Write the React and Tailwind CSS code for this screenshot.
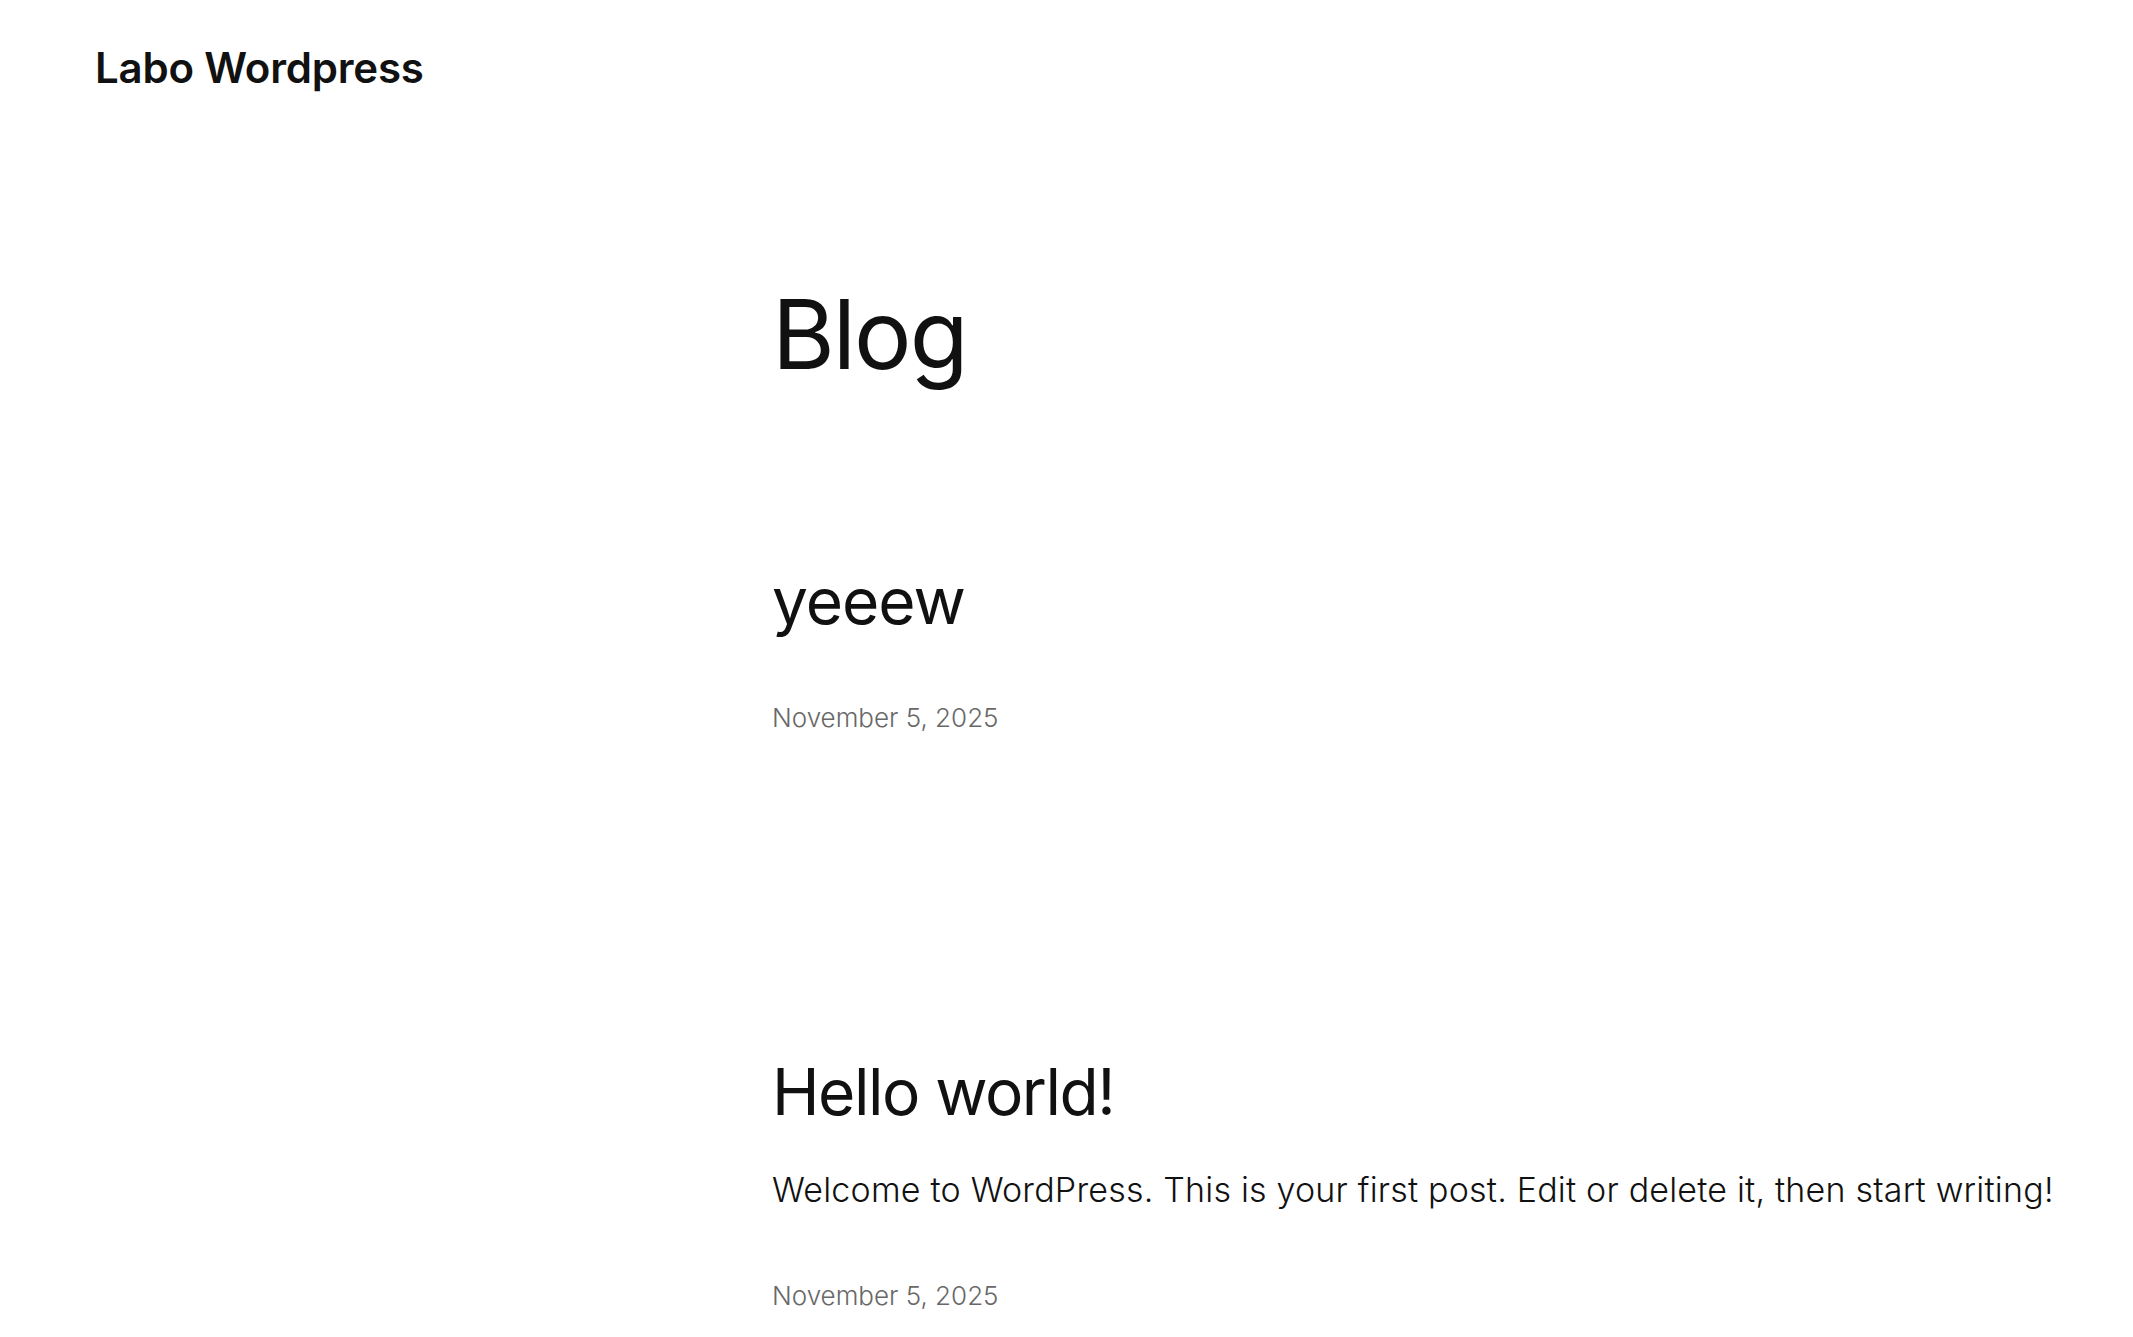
export default function App() {
  const font = { fontFamily: 'Inter, "Noto Sans", sans-serif' };
  return (
    <div className="min-h-[1337px] w-full bg-white text-[#111111]" style={font}>
      <header className="px-[95px] pt-[47px]">
        <div className="text-[42px] leading-none font-semibold tracking-[-0.2px]">Labo Wordpress</div>
      </header>
      <main className="pl-[772px] pr-[20px]">
        <h1 className="mt-[197px] text-[96px] leading-none font-normal tracking-[-2px]">Blog</h1>
        <article className="mt-[187px] flex flex-col">
          <h2 className="text-[64px] leading-none font-normal tracking-[-1px]">yeeew</h2>
          <div className="mt-[72px] text-[26px] leading-none font-light text-[#686868]">November 5, 2025</div>
        </article>
        <article className="mt-[329px] flex flex-col">
          <h2 className="text-[64px] leading-none font-normal tracking-[-1.5px]">Hello world!</h2>
          <p className="mt-[49px] text-[34px] leading-none font-light tracking-[0.2px] whitespace-nowrap">
            Welcome to WordPress. This is your first post. Edit or delete it, then start writing!
          </p>
          <div className="mt-[76px] text-[26px] leading-none font-light text-[#686868]">November 5, 2025</div>
        </article>
      </main>
    </div>
  );
}
